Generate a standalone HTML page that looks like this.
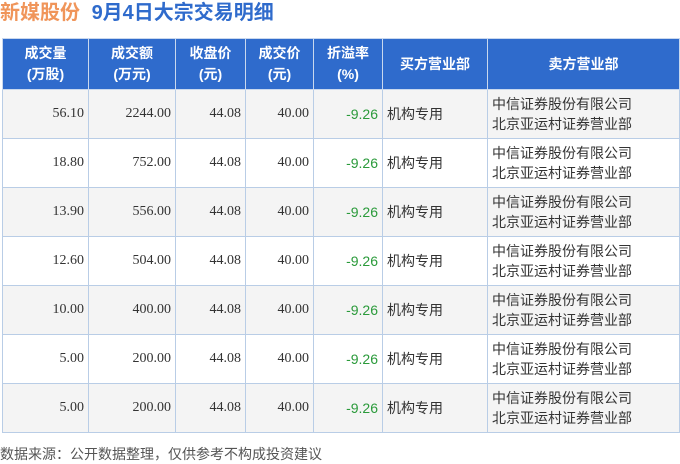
<!DOCTYPE html><html><head><meta charset="utf-8"><style>
body{margin:0;width:680px;height:463px;background:#fff;font-family:"Liberation Sans","Noto Sans CJK SC",sans-serif;position:relative;overflow:hidden}
.t{position:absolute;left:0;top:0;font-size:20px;font-weight:bold;line-height:26px;white-space:nowrap}
table{position:absolute;left:2px;top:38px;border-collapse:collapse;table-layout:fixed;width:677px}
td,th{border:1px solid #b9cde6;padding:0 4px;font-size:14px}
th{background:#2f6bcc;color:#fff;font-weight:bold;height:50px;line-height:21px;border-color:#c9d8ee}
td{height:48px;color:#333;line-height:20px}
tr:nth-child(even) td{background:#f4f4f4}
.n{text-align:right;font-family:"Liberation Serif",serif;font-size:14px}
.g{color:#2a9a3a;text-align:right;font-size:14px}
.f{position:absolute;left:0;top:444px;font-size:14px;color:#555}
</style></head><body>
<div class="t"><span style="color:#f0955a">新媒股份</span> <span style="color:#2f6bcc;margin-left:6px">9月4日大宗交易明细</span></div>
<table>
<colgroup><col style="width:86px"><col style="width:87px"><col style="width:70px"><col style="width:68px"><col style="width:69px"><col style="width:105px"><col style="width:192px"></colgroup>
<tr><th>成交量<br>(万股)</th><th>成交额<br>(万元)</th><th>收盘价<br>(元)</th><th>成交价<br>(元)</th><th>折溢率<br>(%)</th><th>买方营业部</th><th>卖方营业部</th></tr>
<tr><td class="n">56.10</td><td class="n">2244.00</td><td class="n">44.08</td><td class="n">40.00</td><td class="g">-9.26</td><td>机构专用</td><td>中信证券股份有限公司<br>北京亚运村证券营业部</td></tr>
<tr><td class="n">18.80</td><td class="n">752.00</td><td class="n">44.08</td><td class="n">40.00</td><td class="g">-9.26</td><td>机构专用</td><td>中信证券股份有限公司<br>北京亚运村证券营业部</td></tr>
<tr><td class="n">13.90</td><td class="n">556.00</td><td class="n">44.08</td><td class="n">40.00</td><td class="g">-9.26</td><td>机构专用</td><td>中信证券股份有限公司<br>北京亚运村证券营业部</td></tr>
<tr><td class="n">12.60</td><td class="n">504.00</td><td class="n">44.08</td><td class="n">40.00</td><td class="g">-9.26</td><td>机构专用</td><td>中信证券股份有限公司<br>北京亚运村证券营业部</td></tr>
<tr><td class="n">10.00</td><td class="n">400.00</td><td class="n">44.08</td><td class="n">40.00</td><td class="g">-9.26</td><td>机构专用</td><td>中信证券股份有限公司<br>北京亚运村证券营业部</td></tr>
<tr><td class="n">5.00</td><td class="n">200.00</td><td class="n">44.08</td><td class="n">40.00</td><td class="g">-9.26</td><td>机构专用</td><td>中信证券股份有限公司<br>北京亚运村证券营业部</td></tr>
<tr><td class="n">5.00</td><td class="n">200.00</td><td class="n">44.08</td><td class="n">40.00</td><td class="g">-9.26</td><td>机构专用</td><td>中信证券股份有限公司<br>北京亚运村证券营业部</td></tr>
</table>
<div class="f">数据来源：公开数据整理，仅供参考不构成投资建议</div>
</body></html>
